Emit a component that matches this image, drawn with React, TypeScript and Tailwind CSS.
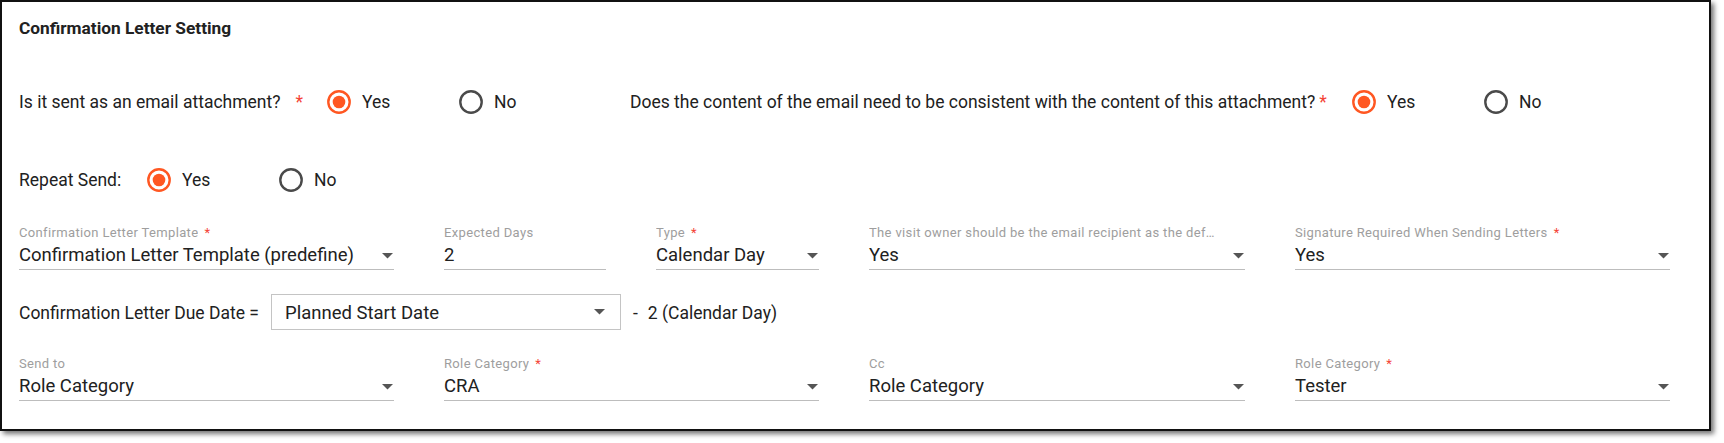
import React from 'react';

const ORANGE = '#ff5722';

function Radio({ checked }: { checked?: boolean }) {
  return (
    <svg width="24" height="24" viewBox="0 0 24 24" className="shrink-0">
      <circle cx="12" cy="12" r="10.7" fill="none" stroke={checked ? ORANGE : '#4a4a4a'} strokeWidth="2.4" />
      {checked && <circle cx="12" cy="12" r="6.3" fill={ORANGE} />}
    </svg>
  );
}

function Option({ label, checked }: { label: string; checked?: boolean }) {
  return (
    <label className="flex items-center w-[132px] shrink-0">
      <Radio checked={checked} />
      <span className="ml-[11px]">{label}</span>
    </label>
  );
}

function Arrow() {
  return (
    <svg width="11" height="6" viewBox="0 0 11 6" className="shrink-0">
      <polygon points="0,0 11,0 5.5,5.5" fill="#555" />
    </svg>
  );
}

function Star({ className = '' }: { className?: string }) {
  return <span className={`text-[#f44336] ${className}`}>*</span>;
}

type FieldProps = {
  label: string;
  value: string;
  required?: boolean;
  arrow?: boolean;
  className: string;
};

function Field({ label, value, required, arrow = true, className }: FieldProps) {
  return (
    <div className={`shrink-0 ${className}`}>
      <div className="h-[18px] leading-[17px] text-[13px] tracking-[0.35px] text-[#9e9e9e] flex">
        <span className="truncate max-w-[350px]">{label}</span>
        {required && <Star className="ml-[6px]" />}
      </div>
      <div className="h-[28px] flex items-center justify-between border-b border-[#bdbdbd] text-[18.5px] text-[#212121]">
        <span>{value}</span>
        {arrow && <span className="mr-[1px] flex"><Arrow /></span>}
      </div>
    </div>
  );
}

export default function App() {
  return (
    <div className="w-[1724px] h-[443px] bg-white overflow-hidden font-['Roboto',sans-serif] text-[#212121]">
      <div className="w-[1711px] h-[431px] border-2 border-[#111] bg-white shadow-[3px_3px_5px_rgba(0,0,0,0.55)] pl-[17px] pt-[15px]">
        {/* Title */}
        <div className="h-[22px] leading-[22px] text-[17.3px] font-bold">Confirmation Letter Setting</div>

        {/* Attachment questions */}
        <div className="mt-[43px] h-[40px] flex items-center text-[17.5px]">
          <div className="w-[308px] shrink-0 flex items-center">
            <span>Is it sent as an email attachment?</span>
            <Star className="ml-[15px]" />
          </div>
          <Option label="Yes" checked />
          <Option label="No" />
          <div className="ml-[39px] w-[722px] shrink-0 flex items-center">
            <span>Does the content of the email need to be consistent with the content of this attachment?</span>
            <Star className="ml-[4px]" />
          </div>
          <Option label="Yes" checked />
          <Option label="No" />
        </div>

        {/* Repeat send */}
        <div className="mt-[38px] h-[40px] flex items-center text-[17.5px]">
          <div className="w-[128px] shrink-0">Repeat Send:</div>
          <Option label="Yes" checked />
          <Option label="No" />
        </div>

        {/* Template row */}
        <div className="mt-[24px] flex gap-[50px]">
          <Field className="w-[375px]" label="Confirmation Letter Template" required value="Confirmation Letter Template (predefine)" />
          <Field className="w-[162px]" label="Expected Days" value="2" arrow={false} />
          <Field className="w-[163px]" label="Type" required value="Calendar Day" />
          <Field className="w-[376px]" label="The visit owner should be the email recipient as the default recipient" value="Yes" />
          <Field className="w-[375px]" label="Signature Required When Sending Letters" required value="Yes" />
        </div>

        {/* Due date */}
        <div className="mt-[24px] h-[36px] flex items-center text-[17.5px]">
          <span className="w-[252px] shrink-0 pt-[3px]">Confirmation Letter Due Date =</span>
          <div className="w-[350px] h-[36px] shrink-0 border border-[#c4c4c4] pl-[13px] pr-[15px] flex items-center justify-between text-[18.5px]">
            <span className="pt-[3px]">Planned Start Date</span>
            <Arrow />
          </div>
          <span className="ml-[12px] pt-[3px]">-</span>
          <span className="ml-[10px] pt-[3px]">2 (Calendar Day)</span>
        </div>

        {/* Recipients */}
        <div className="mt-[25px] flex gap-[50px]">
          <Field className="w-[375px]" label="Send to" value="Role Category" />
          <Field className="w-[375px]" label="Role Category" required value="CRA" />
          <Field className="w-[376px]" label="Cc" value="Role Category" />
          <Field className="w-[375px]" label="Role Category" required value="Tester" />
        </div>
      </div>
    </div>
  );
}
